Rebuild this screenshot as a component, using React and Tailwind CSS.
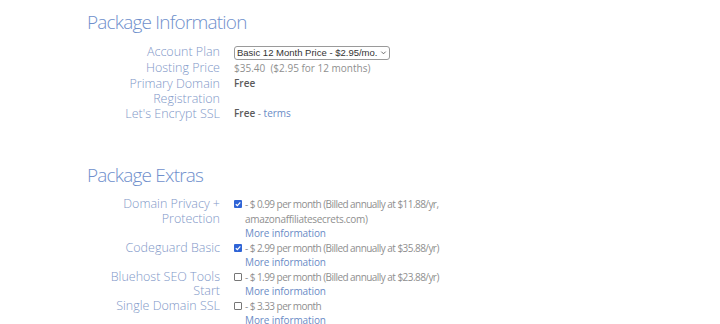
import React from 'react';

const label = 'w-[146px] shrink-0 text-right text-[12.5px] text-[#7f98c8] font-light';
const value = 'pl-[14px] text-[10px] text-[#8f8f8f]';

function Row({ name, children, lh = 'leading-[14.5px]' }) {
  return (
    <div className={`flex ${lh}`}>
      <div className={`${label} ${lh}`}>{name}</div>
      <div className={`${value} ${lh}`}>{children}</div>
    </div>
  );
}

function Check({ checked }) {
  return checked ? (
    <span className="inline-block w-[8px] h-[8px] mr-[3px] rounded-[1px] bg-[#2f64d6] relative">
      <svg viewBox="0 0 8 8" className="absolute inset-0 w-[8px] h-[8px]">
        <path d="M1.8 4.2 L3.4 5.7 L6.3 2.4" stroke="#fff" strokeWidth="1.2" fill="none" />
      </svg>
    </span>
  ) : (
    <span className="inline-block w-[8px] h-[8px] mr-[3px] rounded-[1px] border border-[#777] bg-white" />
  );
}

function More() {
  return <div className="pl-[11px] text-[#6a8bc6] tracking-[-0.1px]">More information</div>;
}

export default function App() {
  return (
    <div className="w-[720px] h-[324px] bg-white overflow-hidden" style={{ fontFamily: '"Open Sans", sans-serif' }}>
      <div className="pl-[74px] pt-[9px]">
        <h1 className="pl-[13px] text-[19px] leading-[26px] font-light tracking-[-0.8px] text-[#6f8fcc]">Package Information</h1>
        <div className="mt-[9px]">
          <Row name="Account Plan" lh="leading-[16px]">
            <div className="inline-flex items-center h-[14px] px-[2px] border border-[#9a9a9a] rounded-[3px] text-[9.5px] text-[#333] leading-none" style={{ fontFamily: '"Liberation Sans", Arial, sans-serif' }}>
              Basic 12 Month Price - $2.95/mo.
              <svg viewBox="0 0 8 8" className="w-[7px] h-[7px] ml-[3px]">
                <path d="M1.5 3 L4 5.5 L6.5 3" stroke="#555" strokeWidth="1" fill="none" />
              </svg>
            </div>
          </Row>
          <Row name="Hosting Price" lh="leading-[16px]">$35.40&nbsp; ($2.95 for 12 months)</Row>
          <Row name={<>Primary Domain<br />Registration</>} lh="leading-[15px]">
            <span className="text-[#5a5a5a] font-semibold">Free</span>
          </Row>
          <Row name="Let's Encrypt SSL" lh="leading-[15px]">
            <span className="text-[#5a5a5a] font-semibold">Free</span> - <span className="text-[#6a8bc6]">terms</span>
          </Row>
        </div>

        <h1 className="mt-[41px] pl-[13px] text-[19px] leading-[26px] font-light tracking-[-0.8px] text-[#6f8fcc]">Package Extras</h1>
        <div className="mt-[9px]">
          <Row name={<>Domain Privacy +<br />Protection</>}>
            <div className="tracking-[-0.55px]"><Check checked />- $ 0.99 per month (Billed annually at $11.88/yr,</div>
            <div className="pl-[11px] tracking-[-0.3px]">amazonaffiliatesecrets.com)</div>
            <More />
          </Row>
          <Row name="Codeguard Basic">
            <div className="tracking-[-0.55px]"><Check checked />- $ 2.99 per month (Billed annually at $35.88/yr)</div>
            <More />
          </Row>
          <Row name={<>Bluehost SEO Tools<br />Start</>}>
            <div className="tracking-[-0.55px]"><Check />- $ 1.99 per month (Billed annually at $23.88/yr)</div>
            <More />
          </Row>
          <Row name="Single Domain SSL">
            <div className="tracking-[-0.55px]"><Check />- $ 3.33 per month</div>
            <More />
          </Row>
        </div>
      </div>
    </div>
  );
}
